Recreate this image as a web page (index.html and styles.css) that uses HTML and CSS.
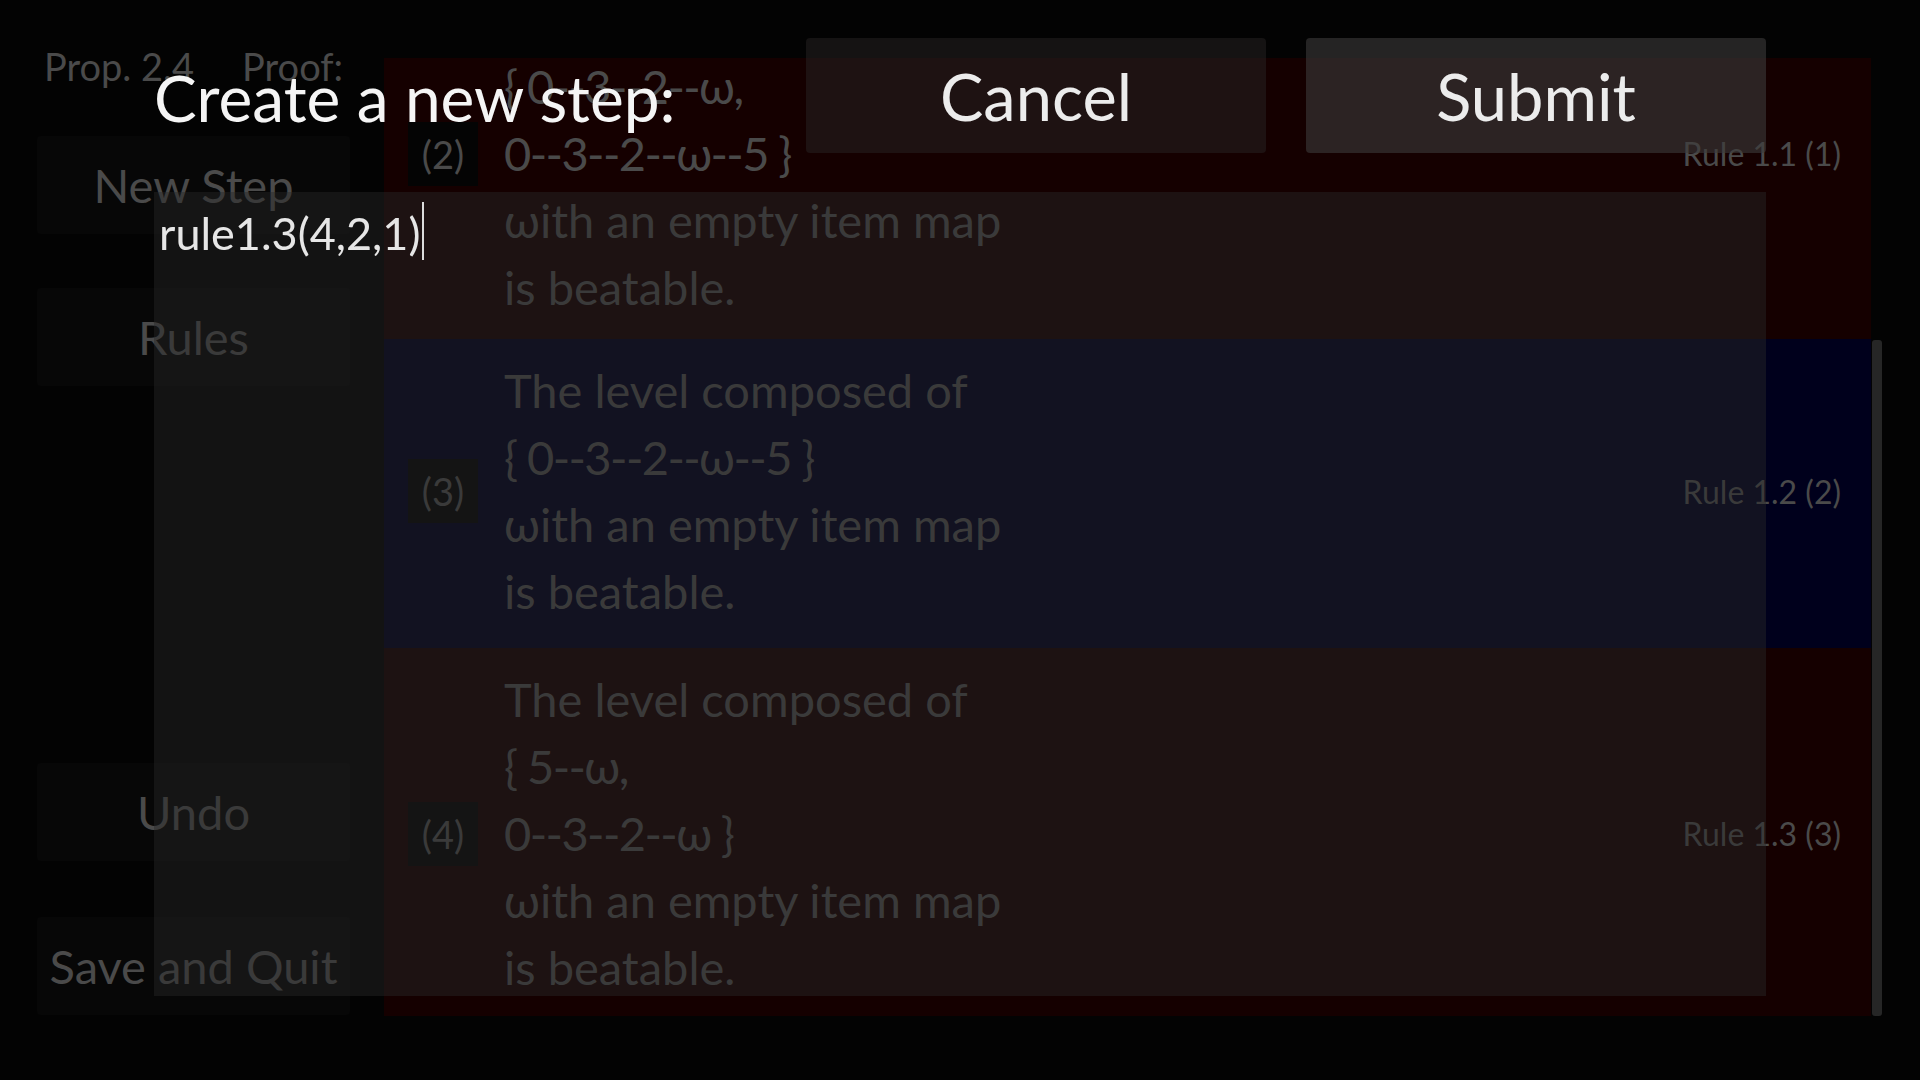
FILE: index.html
```html
<!DOCTYPE html>
<html lang="en">
<head>
<meta charset="utf-8">
<title>Proof editor</title>
<link rel="stylesheet" href="styles.css">
</head>
<body>
<div class="app">
  <aside class="sidebar">
    <div class="sidebar-head"><span>Prop. 2.4</span><span>Proof:</span></div>
    <div class="side-btn">New Step</div>
    <div class="side-btn">Rules</div>
    <div class="side-spacer"></div>
    <div class="side-btn">Undo</div>
    <div class="side-btn side-btn-last">Save and Quit</div>
  </aside>
  <main class="proof">
    <div class="list">
      <div class="list-inner">
        <div class="row row-red">
          <div class="num">(2)</div>
          <div class="stmt">
            <div>The level composed of</div>
            <div class="set">{ 0--3--2--ω,</div>
            <div class="set">0--3--2--ω--5 }</div>
            <div>ωith an empty item map</div>
            <div>is beatable.</div>
          </div>
          <div class="rule">Rule 1.1 (1)</div>
        </div>
        <div class="row row-blue">
          <div class="num">(3)</div>
          <div class="stmt">
            <div>The level composed of</div>
            <div class="set">{ 0--3--2--ω--5 }</div>
            <div>ωith an empty item map</div>
            <div>is beatable.</div>
          </div>
          <div class="rule">Rule 1.2 (2)</div>
        </div>
        <div class="row row-red">
          <div class="num">(4)</div>
          <div class="stmt">
            <div>The level composed of</div>
            <div class="set">{ 5--ω,</div>
            <div class="set">0--3--2--ω }</div>
            <div>ωith an empty item map</div>
            <div>is beatable.</div>
          </div>
          <div class="rule">Rule 1.3 (3)</div>
        </div>
      </div>
    </div>
    <div class="scrollbar"><div class="thumb"></div></div>
  </main>
</div>

<div class="modal">
  <div class="dialog">
    <div class="dialog-head">
      <h1 class="dialog-title">Create a new step:</h1>
      <button class="dlg-btn btn-cancel">Cancel</button>
      <button class="dlg-btn btn-submit">Submit</button>
    </div>
    <div class="step-input">rule1.3(4,2,1)<span class="caret"></span></div>
  </div>
</div>
</body>
</html>
```

FILE: styles.css
```css
html, body {
  margin: 0;
  padding: 0;
  width: 1920px;
  height: 1080px;
  overflow: hidden;
  background: #030303;
  font-family: Lato, "Noto Sans", "DejaVu Sans", sans-serif;
  color: #4a4a4a;
}

.app {
  display: grid;
  grid-template-columns: 384px 1498px;
  height: 1080px;
}

/* ---------- sidebar ---------- */
.sidebar {
  display: flex;
  flex-direction: column;
  padding: 40px 34px 65px 37px;
  box-sizing: border-box;
  height: 1080px;
}

.sidebar-head {
  display: flex;
  gap: 48px;
  height: 52px;
  line-height: 52px;
  font-size: 38px;
  padding-left: 7px;
  margin-bottom: 44px;
  white-space: nowrap;
}

.side-btn {
  height: 98px;
  line-height: 98px;
  text-align: center;
  font-size: 47px;
  background: #070707;
  border-radius: 4px;
  white-space: nowrap;
}

.side-btn + .side-btn {
  margin-top: 54px;
}

.side-btn + .side-btn-last {
  margin-top: 56px;
}

.side-spacer {
  flex: 1;
}

/* ---------- proof list ---------- */
.proof {
  display: flex;
  margin-top: 58px;
  height: 958px;
}

.list {
  width: 1488px;
  height: 958px;
  overflow: hidden;
}

.list-inner {
  margin-top: -90px;
}

.row {
  display: flex;
  align-items: center;
  padding: 18px 30px 18px 24px;
}

.row-red { background: #150000; }
.row-blue {
  background: #00001c;
  padding-bottom: 23px;
}

.num {
  width: 70px;
  height: 64px;
  line-height: 64px;
  text-align: center;
  font-size: 38px;
  background: #040404;
  flex: none;
}

.stmt {
  flex: 1;
  margin-left: 26px;
  font-size: 47px;
  line-height: 67px;
  white-space: nowrap;
}

.set {
  letter-spacing: -1.6px;
}

.rule {
  font-size: 32px;
  white-space: nowrap;
}

.scrollbar {
  width: 10px;
  height: 958px;
  margin-left: 1px;
}

.thumb {
  margin-top: 282px;
  height: 676px;
  background: #262626;
  border-radius: 3px;
}

/* ---------- modal dialog ---------- */
.modal {
  position: fixed;
  inset: 0;
  display: flex;
  justify-content: center;
  align-items: flex-start;
  padding-top: 38px;
}

.dialog {
  width: 1612px;
}

.dialog-head {
  display: flex;
  align-items: center;
  height: 115px;
}

.dialog-title {
  flex: 1;
  margin: 3px 0 0;
  font-size: 64px;
  font-weight: 400;
  color: #f5f5f5;
  white-space: nowrap;
}

.dlg-btn {
  width: 460px;
  height: 115px;
  margin-left: 40px;
  border: none;
  border-radius: 4px;
  font-family: inherit;
  font-size: 65px;
  color: #ececec;
  padding: 0;
}

.btn-cancel {
  background: rgba(40, 36, 36, 0.5);
}

.btn-submit {
  background: rgba(60, 58, 58, 0.6);
}

.step-input {
  margin-top: 39px;
  height: 804px;
  box-sizing: border-box;
  padding: 8px 5px;
  background: rgba(40, 40, 40, 0.45);
  font-size: 45px;
  line-height: 67px;
  color: #e6e6e6;
}

.caret {
  display: inline-block;
  vertical-align: top;
  width: 2px;
  height: 58px;
  margin-top: 2px;
  margin-left: 2px;
  background: #dcdcdc;
}
```
